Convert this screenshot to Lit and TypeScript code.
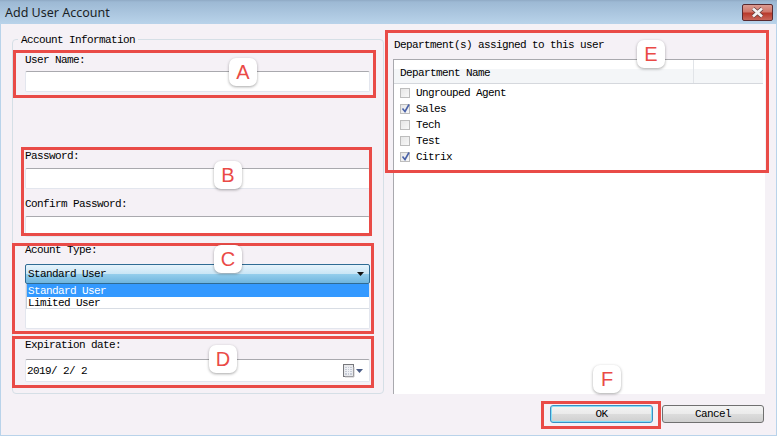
import { LitElement, html, css, svg } from "lit";
import { customElement } from "lit/decorators.js";

const frames = [
  { x: 13, y: 50, w: 363, h: 48 },
  { x: 21, y: 147, w: 351, h: 89 },
  { x: 12, y: 243, w: 362, h: 91 },
  { x: 12, y: 336, w: 362, h: 52 },
  { x: 385, y: 30, w: 384, h: 143 },
  { x: 541, y: 401, w: 120, h: 28 },
];
const badges = [
  { t: "A", x: 229, y: 58 },
  { t: "B", x: 214, y: 161 },
  { t: "C", x: 214, y: 245 },
  { t: "D", x: 209, y: 345 },
  { t: "E", x: 637, y: 40 },
  { t: "F", x: 593, y: 365 },
];
const depts = [
  { n: "Ungrouped Agent", c: false },
  { n: "Sales", c: true },
  { n: "Tech", c: false },
  { n: "Test", c: false },
  { n: "Citrix", c: true },
];

@customElement("app-root")
export class AppRoot extends LitElement {
  static styles = css`
    :host {
      display: block;
      position: relative;
      width: 777px;
      height: 436px;
      overflow: hidden;
      font: 11px/12px "Liberation Mono", monospace;
      letter-spacing: -0.6px;
      color: #000;
    }
    .win {
      box-sizing: border-box;
      height: 436px;
      display: flex;
      flex-direction: column;
      background: #f5f1f6;
      border-left: 1px solid #b9d3ea;
      border-right: 1px solid #b9d3ea;
      border-bottom: 1px solid #b9d3ea;
    }
    .title {
      height: 24px;
      margin: 0 -1px;
      flex: none;
      display: flex;
      align-items: flex-start;
      justify-content: space-between;
      background: linear-gradient(#8fa9c4 0, #9db9d4 2px, #b9d3ea 100%);
    }
    .title span {
      font: 12.5px/25px "Noto Sans", sans-serif;
      letter-spacing: 0;
      padding-left: 5px;
      color: #1a1f26;
    }
    .close {
      box-sizing: border-box;
      width: 31px;
      height: 17px;
      margin: 4px 4px 0 0;
      border: 1px solid #5a2a30;
      border-radius: 2px;
      display: flex;
      align-items: center;
      justify-content: center;
      background: linear-gradient(#dc9a90 0, #d0786c 45%, #b83a2c 55%, #c9665a 100%);
    }
    .main {
      display: flex;
      align-items: flex-start;
      padding: 15px 0 0 11px;
      gap: 9px;
      flex: none;
    }
    .group {
      position: relative;
      box-sizing: border-box;
      width: 372px;
      height: 355px;
      border: 1px solid #d5dfe6;
      border-radius: 4px;
      padding: 0 13px 0 12px;
      display: flex;
      flex-direction: column;
    }
    .legend {
      position: absolute;
      left: 5px;
      top: -6px;
      padding: 0 3px;
      background: #f5f1f6;
    }
    .label { height: 12px; flex: none; white-space: pre; line-height: 14px; }
    .lab-user { margin-top: 13px; }
    .lab-pass { margin-top: 57px; }
    .lab-conf { margin-top: 8px; }
    .lab-acc { margin-top: 6px; }
    .lab-exp { margin-top: 9px; }
    .input {
      box-sizing: border-box;
      flex: none;
      height: 21px;
      background: #fff;
      border: 1px solid #e3e6ee;
      border-top-color: #a9a9ae;
      border-radius: 2px;
    }
    .mt6 { margin-top: 6px; }
    .mt7 { margin-top: 7px; }
    .combo {
      box-sizing: border-box;
      height: 20px;
      flex: none;
      margin-top: 9px;
      border: 1px solid #2f6c94;
      border-radius: 2px;
      display: flex;
      align-items: center;
      justify-content: space-between;
      padding: 0 5px 0 2px;
      background: linear-gradient(#e6f4fc 0, #c9e5f5 50%, #93cdec 52%, #6fb5de 100%);
    }
    .listwrap {
      box-sizing: border-box;
      flex: none;
      height: 45px;
      background: #fff;
      border: 1px solid #e3e6ee;
      border-top: none;
      border-radius: 0 0 2px 2px;
    }
    .list {
      box-sizing: border-box;
      height: 25px;
      border-bottom: 1px solid #d8dde4;
      border-left: 1px solid #c4cbd4;
    }
    .opt { height: 12px; padding-left: 1px; line-height: 12px; }
    .opt.sel { height: 13px; background: #3399ff; color: #fff; line-height: 14px; }
    .date {
      box-sizing: border-box;
      flex: none;
      height: 23px;
      margin-top: 9px;
      background: #fff;
      border: 1px solid #e3e6ee;
      border-top-color: #a9a9ae;
      border-radius: 2px;
      display: flex;
      align-items: center;
      justify-content: space-between;
      padding: 0 5px 0 1px;
    }
    .right {
      width: 372px;
      display: flex;
      flex-direction: column;
    }
    .right .label { margin-top: -1px; padding-left: 1px; }
    .table {
      box-sizing: border-box;
      margin-top: 9px;
      height: 335px;
      background: #fff;
      border-left: 1px solid #a9a9ae;
      border-top: 1px solid #a9a9ae;
      display: flex;
      flex-direction: column;
    }
    .head {
      flex: none;
      height: 23px;
      display: flex;
      background: linear-gradient(#fff 0, #fff 9px, #f4f6f8 9px, #f4f6f8 100%);
      border-bottom: 1px solid #d5d8dd;
      margin-right: 2px;
    }
    .head .c1 {
      box-sizing: border-box;
      width: 300px;
      padding: 7px 0 0 6px;
      border-right: 1px solid #e1e4e8;
    }
    .rows { padding-top: 1px; }
    .row {
      height: 16px;
      display: flex;
      align-items: center;
      padding-left: 6px;
      gap: 6px;
    }
    .check {
      box-sizing: border-box;
      width: 10px;
      height: 10px;
      border: 1px solid #bdbdbd;
      background: linear-gradient(135deg, #e6e6e6, #f8f8f8);
      position: relative;
      flex: none;
    }
    .check svg { position: absolute; left: -1px; top: -2px; }
    .foot {
      display: flex;
      justify-content: flex-end;
      gap: 9px;
      padding: 11px 12px 0 0;
    }
    .btn {
      box-sizing: border-box;
      height: 18px;
      width: 102px;
      border: 1px solid #707070;
      border-radius: 3px;
      text-align: center;
      line-height: 17px;
      background: linear-gradient(#f3f3f3 0, #ebebeb 48%, #dcdcdc 52%, #cfcfcf 100%);
    }
    .btn.ok {
      width: 103px;
      border-color: #3a8fc4;
      box-shadow: inset 0 0 0 1px #86e0f6;
    }
    .frame {
      position: absolute;
      box-sizing: border-box;
      border: 3px solid #e94b47;
    }
    .badge {
      position: absolute;
      box-sizing: border-box;
      width: 28px;
      height: 28px;
      border-radius: 7px;
      background: #fff;
      box-shadow: 0 1px 3px rgba(0, 0, 0, 0.35);
      color: #ea4a46;
      font: 20px/28px "Liberation Sans", sans-serif;
      letter-spacing: 0;
      text-align: center;
    }
  `;

  private calIcon() {
    return html`<svg width="21" height="14" viewBox="0 0 21 14">
      <rect x="0.5" y="0.5" width="10" height="12" fill="#e8e9ec" stroke="#77787c"/>
      <rect x="2" y="3" width="7" height="8" fill="#c6cbd6"/>
      ${[4, 6, 8].map((y) => svg`<path d="M2 ${y}.5H9" stroke="#eef0f4"/>`)}
      ${[4, 6].map((x) => svg`<path d="M${x}.5 3V11" stroke="#eef0f4"/>`)}
      <path d="M11 3V13H2" fill="none" stroke="#c5c3c6"/>
      <path d="M13 5H20L16.5 9Z" fill="#4a5c86"/>
    </svg>`;
  }

  render() {
    return html`
      <div class="win">
        <div class="title">
          <span>Add User Account</span>
          <div class="close">
            <svg width="17" height="11" viewBox="0 0 17 11">
              <path d="M4 1.5L13 9.5M13 1.5L4 9.5" stroke="#5c3a3a" stroke-width="4"/>
              <path d="M4 1.5L13 9.5M13 1.5L4 9.5" stroke="#f4f1f1" stroke-width="2.8"/>
            </svg>
          </div>
        </div>
        <div class="main">
          <div class="group">
            <div class="legend">Account Information</div>
            <div class="label lab-user">User Name:</div>
            <div class="input mt6"></div>
            <div class="label lab-pass">Password:</div>
            <div class="input mt7"></div>
            <div class="label lab-conf">Confirm Password:</div>
            <div class="input mt7"></div>
            <div class="label lab-acc">Acount Type:</div>
            <div class="combo">
              <span>Standard User</span>
              <svg width="7" height="4" viewBox="0 0 7 4"><path d="M0 0H7L3.5 4Z" fill="#111"/></svg>
            </div>
            <div class="listwrap">
              <div class="list">
                <div class="opt sel">Standard User</div>
                <div class="opt">Limited User</div>
              </div>
            </div>
            <div class="label lab-exp">Expiration date:</div>
            <div class="date"><span>2019/ 2/ 2</span>${this.calIcon()}</div>
          </div>
          <div class="right">
            <div class="label">Department(s) assigned to this user</div>
            <div class="table">
              <div class="head"><div class="c1">Department Name</div></div>
              <div class="rows">
                ${depts.map(
                  (d) => html`<div class="row">
                    <span class="check">
                      ${d.c
                        ? html`<svg width="11" height="11" viewBox="0 0 11 11"><path d="M2.5 5.5L5 8.5L9 1.5" fill="none" stroke="#4a62a8" stroke-width="1.6"/></svg>`
                        : ""}
                    </span>
                    <span>${d.n}</span>
                  </div>`
                )}
              </div>
            </div>
          </div>
        </div>
        <div class="foot">
          <div class="btn ok">OK</div>
          <div class="btn">Cancel</div>
        </div>
      </div>
      ${frames.map(
        (f) => html`<div class="frame" style="left:${f.x}px;top:${f.y}px;width:${f.w}px;height:${f.h}px"></div>`
      )}
      ${badges.map(
        (b) => html`<div class="badge" style="left:${b.x}px;top:${b.y}px">${b.t}</div>`
      )}
    `;
  }
}
